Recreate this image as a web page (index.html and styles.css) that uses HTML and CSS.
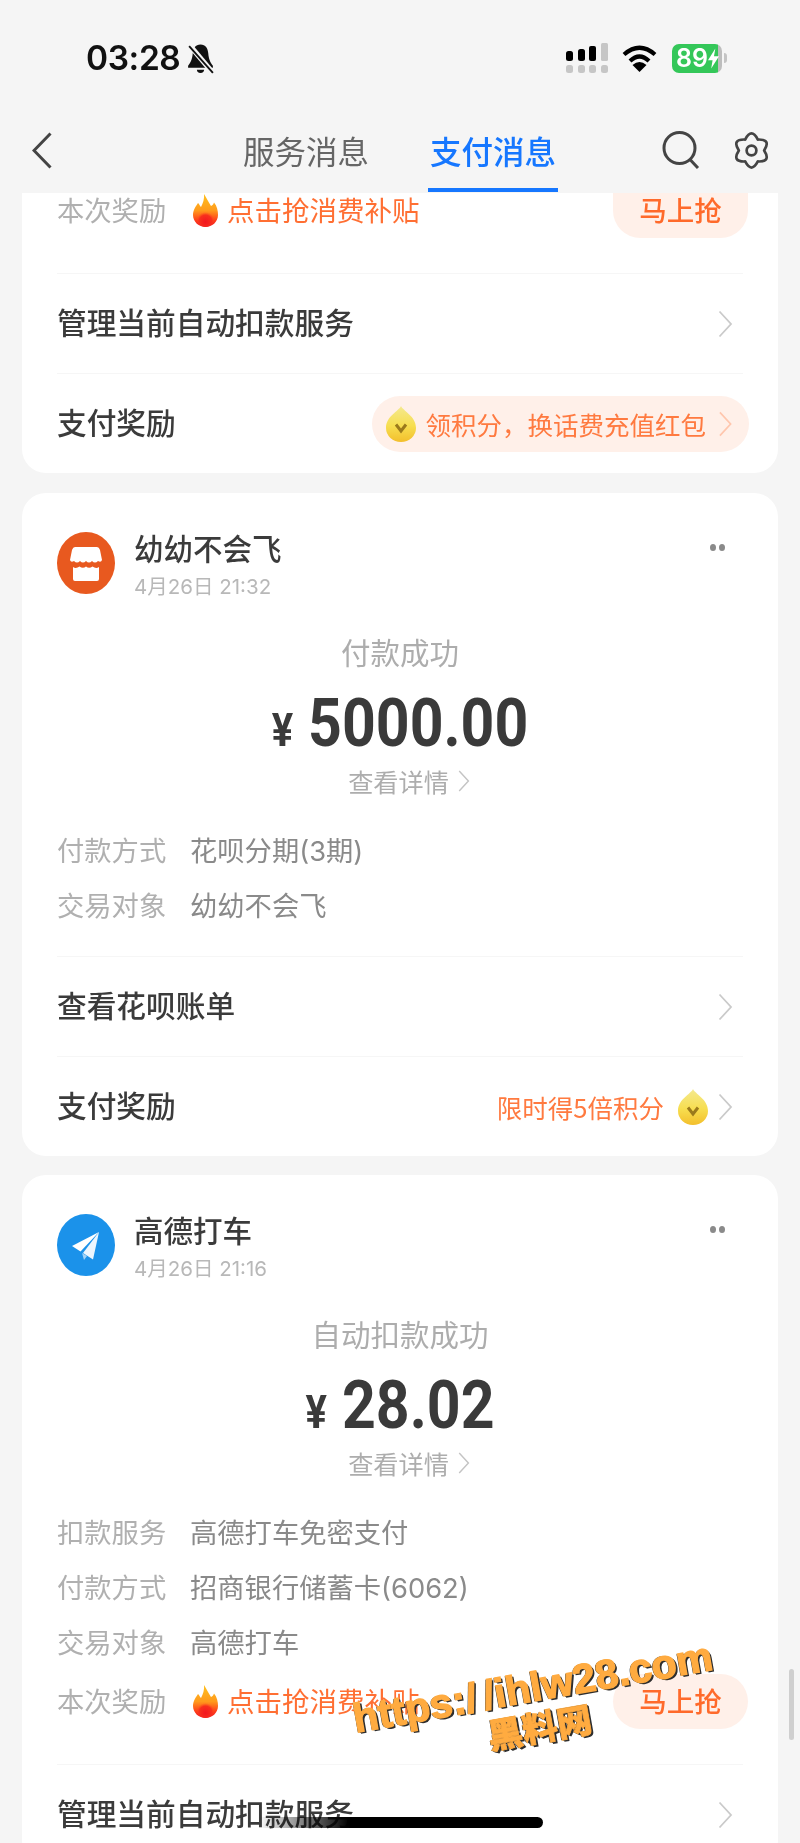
FILE: index.html
```html
<!DOCTYPE html>
<html lang="zh-CN">
<head>
<meta charset="utf-8">
<title>支付消息</title>
<link rel="stylesheet" href="styles.css">
</head>
<body>
<svg class="sprite" aria-hidden="true">
  <defs>
    <linearGradient id="coinFill" x1="0" y1="0" x2="0" y2="1">
      <stop offset="0" stop-color="#f4e98f"/>
      <stop offset=".55" stop-color="#f7de50"/>
      <stop offset="1" stop-color="#f3bf2c"/>
    </linearGradient>
    <linearGradient id="flameFill" x1="0" y1="0" x2="0" y2="1">
      <stop offset="0" stop-color="#ffc21f"/>
      <stop offset=".5" stop-color="#ff9a1c"/>
      <stop offset=".8" stop-color="#ff3d1a"/>
      <stop offset="1" stop-color="#ef1a24"/>
    </linearGradient>
    <radialGradient id="flameCore" cx=".5" cy=".75" r=".5">
      <stop offset="0" stop-color="#f2161f"/>
      <stop offset=".7" stop-color="#f8301d"/>
      <stop offset="1" stop-color="#ff5a1d" stop-opacity="0"/>
    </radialGradient>
    <symbol id="chev" viewBox="0 0 15 28">
      <path d="M1.500 1.500 13 14 1.500 26.500" fill="none" stroke="currentColor" stroke-width="1.800"/>
    </symbol>
    <symbol id="coin" viewBox="0 0 30 36">
      <path d="M15 0C17 5 30 10 30 22A15 14 0 0 1 0 22C0 10 13 5 15 0Z" fill="url(#coinFill)"/>
      <path d="M10 18.500 15 25 20 18.500" fill="none" stroke="#9b7a1c" stroke-width="3"/>
    </symbol>
    <symbol id="flame" viewBox="0 0 25 33">
      <path d="M11 0C14 5 16 9 18 12 20 11 20.500 10 21 8.500 24 12 25 17 25 21 25 28 19 33 12.500 33 6 33 0 28 0 21 0 16 3 12 5 9 6.500 10.500 7 12 8 13 10 9 11.500 5 11 0Z" fill="url(#flameFill)"/>
      <ellipse cx="12.500" cy="23" rx="9.500" ry="10" fill="url(#flameCore)"/>
    </symbol>
  </defs>
</svg>

<div class="app">
  <header class="header">
    <div class="status">
      <div class="status-left">
        <span class="clock">03:28</span>
        <svg class="bell" viewBox="0 0 26 30">
          <path d="M13 1.500C8 1.500 6 5 5.500 10 5 16 3.500 19 1 22V24H25V22C22.500 19 21 16 20.500 10 20 5 18 1.500 13 1.500Z" fill="#111"/>
          <path d="M9.500 26A3.500 3 0 0 0 16.500 26Z" fill="#111"/>
          <path d="M1.500 1 25 29" stroke="#f5f5f5" stroke-width="5"/>
          <path d="M2 3 25 29" stroke="#111" stroke-width="1.800"/>
        </svg>
      </div>
      <div class="status-right">
        <svg class="signal" viewBox="0 0 42 30">
          <g fill="#000">
            <rect x="0" y="8" width="7" height="10" rx="2.500"/>
            <rect x="12" y="6" width="7" height="12" rx="2.500"/>
            <rect x="23" y="3" width="7" height="15" rx="2"/>
          </g>
          <g fill="#c6c6c6">
            <rect x="35" y="0" width="7" height="18" rx="1.500"/>
            <rect x="0" y="22" width="7" height="8" rx="2.500"/>
            <rect x="12" y="22" width="7" height="8" rx="2.500"/>
            <rect x="23" y="22" width="7" height="8" rx="2.500"/>
            <rect x="35" y="22" width="7" height="8" rx="2.500"/>
          </g>
        </svg>
        <svg class="wifi" viewBox="0 0 35 28">
          <path d="M2 10.500Q17.500 -3 33 10.500M8 17Q17.500 8 27 17" fill="none" stroke="#000" stroke-width="4.200"/>
          <path d="M17.500 28 10.500 21Q17.500 15 24.500 21Z" fill="#000"/>
        </svg>
        <div class="battery">
          <span class="battery-level">89</span>
          <svg class="bolt" viewBox="0 0 12 22"><path d="M8 0 0 13H5L3.500 22 12 8.500H6.500Z" fill="#fff"/></svg>
        </div>
        <span class="battery-nub"></span>
      </div>
    </div>
    <nav class="nav">
      <svg class="back" viewBox="0 0 20 37"><path d="M18.500 1.500 2 18.500 18.500 35.500" fill="none" stroke="#444" stroke-width="3"/></svg>
      <div class="tabs">
        <span class="tab">服务消息</span>
        <span class="tab tab-active">支付消息</span>
      </div>
      <div class="nav-tools">
        <svg class="search" viewBox="0 0 38 38">
          <circle cx="17.500" cy="17" r="15.500" fill="none" stroke="#444" stroke-width="3"/>
          <path d="M28 28.500 36 37" stroke="#444" stroke-width="3"/>
        </svg>
        <svg class="gear" viewBox="-1 -1 38 38">
          <path d="M31 18Q38.520 29.850 24.500 29.260 18 41.700 11.500 29.260-2.520 29.850 5 18-2.520 6.150 11.500 6.740 18-5.700 24.500 6.740 38.520 6.150 31 18Z" fill="none" stroke="#444" stroke-width="2.800" stroke-linejoin="round"/>
          <circle cx="18" cy="18" r="5" fill="none" stroke="#444" stroke-width="2.800"/>
        </svg>
      </div>
    </nav>
  </header>

  <main class="feed">
    <section class="card card-scrolled">
      <div class="reward-row reward-row-top">
        <span class="label">本次奖励</span>
        <svg class="flame"><use href="#flame"/></svg>
        <span class="reward-text">点击抢消费补贴</span>
        <span class="grab"><span class="grab-text">马上抢</span></span>
      </div>
      <div class="link-row">
        <span class="link-title">管理当前自动扣款服务</span>
        <svg class="chev"><use href="#chev"/></svg>
      </div>
      <div class="link-row">
        <span class="link-title">支付奖励</span>
        <div class="promo-pill">
          <svg class="coin"><use href="#coin"/></svg>
          <span class="promo-text">领积分，换话费充值红包</span>
          <svg class="chev chev-orange"><use href="#chev"/></svg>
        </div>
      </div>
    </section>

    <section class="card">
      <div class="merchant">
        <svg class="avatar" viewBox="0 0 58 62">
          <ellipse cx="29" cy="31" rx="29" ry="31" fill="#e8591f"/>
          <path d="M18 15H40Q42 15 43 18L45 28Q44 31 41 29 38 32 35 29 32 32 29 29 26 32 23 29 20 32 17 29 14 31 13 28L15 18Q16 15 18 15Z" fill="#fff"/>
          <path d="M16 35Q19 37 22.500 34.500 26 37 29 34.500 32 37 35.500 34.500 39 37 42 35V47Q42 49 40 49H18Q16 49 16 47Z" fill="#fff"/>
        </svg>
        <div class="merchant-text">
          <div class="merchant-name">幼幼不会飞</div>
          <div class="merchant-date">4月26日 21:32</div>
        </div>
        <div class="more"><i></i><i></i></div>
      </div>
      <div class="summary">
        <div class="summary-status">付款成功</div>
        <div class="amount"><span class="yen">¥</span><span class="sum">5000.00</span></div>
        <div class="detail-link">查看详情<svg class="chev chev-small"><use href="#chev"/></svg></div>
      </div>
      <div class="facts">
        <div class="fact"><span class="label">付款方式</span><span class="value">花呗分期(3期)</span></div>
        <div class="fact"><span class="label">交易对象</span><span class="value">幼幼不会飞</span></div>
      </div>
      <div class="link-row">
        <span class="link-title">查看花呗账单</span>
        <svg class="chev"><use href="#chev"/></svg>
      </div>
      <div class="link-row">
        <span class="link-title">支付奖励</span>
        <div class="promo-plain">
          <span class="promo-text">限时得5倍积分</span>
          <svg class="coin"><use href="#coin"/></svg>
          <svg class="chev"><use href="#chev"/></svg>
        </div>
      </div>
    </section>

    <section class="card">
      <div class="merchant">
        <svg class="avatar" viewBox="0 0 58 62">
          <ellipse cx="29" cy="31" rx="29" ry="31" fill="#1b92ea"/>
          <path d="M42 18 15 32 23.500 37.500Z" fill="#fff"/>
          <path d="M42 18 26 39 36 45.500Z" fill="#fff" opacity=".92"/>
          <path d="M25 39 27 46 30 42Z" fill="#fff" opacity=".6"/>
        </svg>
        <div class="merchant-text">
          <div class="merchant-name">高德打车</div>
          <div class="merchant-date">4月26日 21:16</div>
        </div>
        <div class="more"><i></i><i></i></div>
      </div>
      <div class="summary">
        <div class="summary-status">自动扣款成功</div>
        <div class="amount"><span class="yen">¥</span><span class="sum">28.02</span></div>
        <div class="detail-link">查看详情<svg class="chev chev-small"><use href="#chev"/></svg></div>
      </div>
      <div class="facts facts-long">
        <div class="fact"><span class="label">扣款服务</span><span class="value">高德打车免密支付</span></div>
        <div class="fact"><span class="label">付款方式</span><span class="value">招商银行储蓄卡(6062)</span></div>
        <div class="fact"><span class="label">交易对象</span><span class="value">高德打车</span></div>
      </div>
      <div class="reward-row reward-row-inline">
        <span class="label">本次奖励</span>
        <svg class="flame"><use href="#flame"/></svg>
        <span class="reward-text">点击抢消费补贴</span>
        <span class="grab"><span class="grab-text">马上抢</span></span>
      </div>
      <div class="link-row">
        <span class="link-title">管理当前自动扣款服务</span>
        <svg class="chev"><use href="#chev"/></svg>
      </div>
    </section>
  </main>

  <div class="watermark">
    <div class="watermark-url">https:/ /ihlw28.com</div>
    <div class="watermark-name">黑料网</div>
  </div>
  <div class="scrollbar"></div>
  <div class="home-bar"></div>
</div>
</body>
</html>
```

FILE: styles.css
```css
* { box-sizing: border-box; }

html, body {
  margin: 0;
  padding: 0;
  background: #f5f5f5;
}

body {
  font-family: "Noto Sans CJK SC", "Noto Sans", sans-serif;
  color: #3b3b3b;
}

.sprite {
  position: absolute;
  width: 0;
  height: 0;
}

.app {
  position: relative;
  width: 800px;
  height: 1843px;
  overflow: hidden;
  background: #f5f5f5;
  filter: blur(0.65px);
}

/* header */
.header {
  height: 193px;
}

.status {
  height: 116px;
  display: flex;
  align-items: center;
  justify-content: space-between;
  padding: 0 73px 0 86px;
}

.status-left,
.status-right {
  display: flex;
  align-items: center;
}

.clock {
  font-family: Inter, sans-serif;
  font-size: 33.500px;
  font-weight: 600;
  line-height: 40px;
  color: #111;
  letter-spacing: -0.4px;
}

.bell {
  width: 27px;
  height: 31px;
  margin-left: 7px;
}

.signal {
  width: 42px;
  height: 30px;
}

.wifi {
  width: 35px;
  height: 28px;
  margin-left: 14px;
}

.battery {
  width: 50px;
  height: 29px;
  margin-left: 15px;
  padding-left: 4px;
  display: flex;
  align-items: center;
  border-radius: 7px;
  background: linear-gradient(90deg, #34c759 0 46px, #bdbdbd 46px);
  color: #fff;
}

.battery-level {
  font-family: Inter, sans-serif;
  font-size: 25px;
  font-weight: 600;
  line-height: 29px;
}

.bolt {
  width: 11px;
  height: 21px;
}

.battery-nub {
  width: 3px;
  height: 10px;
  margin-left: 2px;
  border-radius: 0 3px 3px 0;
  background: #c4c4c4;
}

.nav {
  height: 77px;
  display: flex;
  align-items: flex-start;
  padding: 16px 30px 0 32px;
}

.back {
  width: 20px;
  height: 37px;
}

.tabs {
  display: flex;
  gap: 57px;
  margin-left: 189px;
  margin-top: -4px;
}

.tab {
  padding: 0 2px;
  height: 64px;
  font-size: 31.500px;
  line-height: 44px;
  color: #666;
}

.tab-active {
  color: #1677ff;
  font-weight: 500;
  border-bottom: 4px solid #1677ff;
}

.nav-tools {
  display: flex;
  gap: 33px;
  margin-left: auto;
}

.search {
  width: 38px;
  height: 38px;
  margin-top: -1px;
}

.gear {
  width: 37px;
  height: 37px;
}

/* feed */
.feed {
  padding: 0 22px;
  display: flex;
  flex-direction: column;
  gap: 19px;
}

.card {
  flex: none;
  padding: 39px 35px 0;
  background: #fff;
  border-radius: 24px;
}

.card-scrolled {
  margin-bottom: 1px;
  padding-top: 0;
  border-radius: 0 0 24px 24px;
}

/* rows */
.reward-row {
  height: 55px;
  margin-bottom: 35px;
  display: flex;
  align-items: center;
}

.reward-row-inline {
  margin-top: 4px;
}

.reward-row-top {
  height: 45px;
  align-items: flex-start;
}

.label {
  width: 133px;
  flex: none;
  font-size: 27.300px;
  line-height: 33px;
  color: #b0b0b0;
}

.flame {
  width: 25px;
  height: 33px;
  margin-left: 3px;
  flex: none;
}

.reward-row-top .flame {
  margin-top: 1px;
}

.reward-text {
  margin-left: 9px;
  font-size: 27.500px;
  line-height: 33px;
  color: #ff6f33;
}

.reward-row-inline .label,
.reward-row-inline .reward-text {
  margin-bottom: 2px;
}

.grab {
  width: 135px;
  height: 55px;
  margin-left: auto;
  margin-right: -5px;
  padding-bottom: 2px;
  display: flex;
  align-items: center;
  justify-content: center;
  border-radius: 27.500px;
  background: #fff0e9;
}

.reward-row-top .grab {
  height: 45px;
  padding-bottom: 12px;
  border-radius: 0 0 27.500px 27.500px;
}

.grab-text {
  font-size: 27.500px;
  font-weight: 500;
  line-height: 33px;
  color: #ff6a2b;
}

.link-row {
  height: 100px;
  padding-right: 10px;
  display: flex;
  align-items: center;
  justify-content: space-between;
  border-top: 1px solid #f6f6f6;
}

.link-title {
  padding-bottom: 4px;
  font-size: 29.700px;
  font-weight: 500;
  line-height: 40px;
}

.chev {
  width: 15px;
  height: 28px;
  flex: none;
  color: #cacaca;
}

.chev-orange {
  height: 26px;
  color: #ffc6ad;
}

.chev-small {
  width: 12px;
  height: 24px;
  margin-left: 9px;
  color: #c4c4c4;
}

.promo-pill {
  height: 56px;
  margin-right: -16px;
  padding: 0 16px 0 14px;
  display: flex;
  align-items: center;
  border-radius: 28px;
  background: #fff0e9;
}

.promo-plain {
  display: flex;
  align-items: center;
}

.promo-text {
  font-size: 25.500px;
  line-height: 36px;
  color: #ff7a40;
}

.coin {
  width: 30px;
  height: 36px;
  flex: none;
}

.promo-pill .coin {
  margin-right: 9px;
}

.promo-pill .chev {
  margin-left: 12px;
}

.promo-plain .coin {
  margin-left: 14px;
  margin-right: 10px;
}

/* merchant */
.merchant {
  height: 62px;
  display: flex;
  align-items: flex-start;
}

.avatar {
  width: 58px;
  height: 62px;
  flex: none;
}

.merchant-text {
  margin-left: 19px;
}

.merchant-name {
  font-size: 29.500px;
  font-weight: 500;
  line-height: 30px;
}

.merchant-date {
  margin-top: 10px;
  font-family: Inter, "Noto Sans CJK SC", sans-serif;
  font-size: 20.500px;
  line-height: 30px;
  color: #b8b8b8;
}

.more {
  margin-left: auto;
  margin-right: 18px;
  margin-top: 12px;
  display: flex;
  gap: 3px;
}

.more i {
  width: 6px;
  height: 7px;
  border-radius: 50%;
  background: #8a8a8a;
}

/* summary */
.summary {
  margin-top: 37px;
  display: flex;
  flex-direction: column;
  align-items: center;
}

.summary-status {
  font-size: 29.500px;
  line-height: 40px;
  color: #adadad;
}

.amount {
  margin-top: 17px;
  height: 70px;
  display: flex;
  align-items: baseline;
  gap: 15px;
  font-family: Roboto, sans-serif;
  font-weight: 700;
  line-height: 70px;
  color: #3a3a3a;
  transform: scaleY(1.14);
}

.yen {
  font-size: 40px;
}

.sum {
  font-size: 59px;
}

.detail-link {
  margin-top: 5px;
  margin-left: 18px;
  height: 36px;
  display: flex;
  align-items: center;
  font-size: 25.200px;
  line-height: 36px;
  color: #adadad;
}

.facts {
  margin-top: 24px;
  padding-bottom: 23px;
}

.facts-long {
  padding-bottom: 0;
}

.fact {
  height: 55px;
  padding-top: 10px;
  display: flex;
  align-items: baseline;
}

.value {
  font-family: Inter, "Noto Sans CJK SC", sans-serif;
  font-size: 27.300px;
  line-height: 33px;
  color: #8a8a8a;
}

/* overlays */
.watermark {
  position: absolute;
  left: 340px;
  top: 1668px;
  width: 392px;
  transform: rotate(-10deg);
  text-align: center;
  color: #ffab40;
  text-shadow: 2px 2px 0 #2e2e2e, 1px 1px 0 #2e2e2e, -1px 0 0 #2e2e2e;
}

.watermark-url {
  font-family: "Liberation Sans", sans-serif;
  font-size: 41px;
  font-weight: 700;
  line-height: 38px;
  word-spacing: -5px;
  -webkit-text-stroke: 1.400px #ffab40;
}

.watermark-name {
  margin-top: 2px;
  font-size: 35px;
  font-weight: 900;
  line-height: 36px;
  -webkit-text-stroke: 0.800px #ffab40;
}

.scrollbar {
  position: absolute;
  left: 789px;
  top: 1669px;
  width: 5px;
  height: 71px;
  border-radius: 3px;
  background: #cfcfcf;
}

.home-bar {
  position: absolute;
  left: 258px;
  top: 1817px;
  width: 285px;
  height: 11px;
  border-radius: 0 6px 6px 0;
  background: linear-gradient(90deg, rgba(0, 0, 0, 0) 0, #000 32%);
}
```
